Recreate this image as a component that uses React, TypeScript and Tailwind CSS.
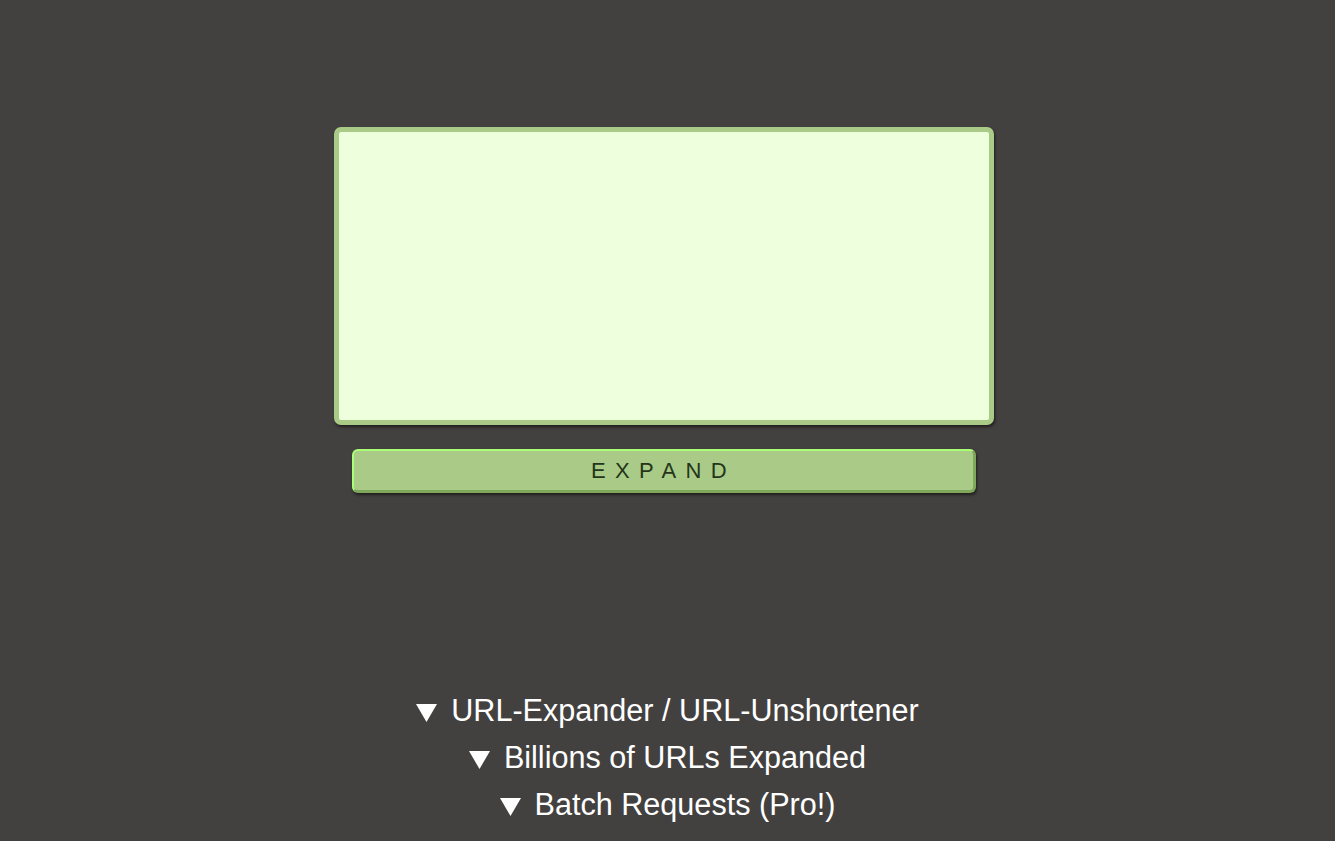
import React from "react";

function Tri() {
  return (
    <svg width="21" height="18" viewBox="0 0 21 18" className="inline-block mr-[14px] align-baseline" style={{ transform: "translateY(1px)" }}>
      <polygon points="0,0 21,0 10.5,18" fill="#ffffff" />
    </svg>
  );
}

export default function App() {
  const lines = [
    "URL-Expander / URL-Unshortener",
    "Billions of URLs Expanded",
    "Batch Requests (Pro!)",
  ];
  return (
    <div
      className="min-h-screen w-full bg-[#43413f] flex flex-col items-center"
      style={{ fontFamily: '"Liberation Sans", Arial, sans-serif' }}
    >
      <div className="flex flex-col items-center pt-[127px] pr-[7px]">
        <textarea
          className="block w-[660px] h-[298px] border-[5px] border-[#aacb88] rounded-[7px] bg-[#eeffdd] resize-none outline-none shadow-[1px_2px_3px_rgba(0,0,0,0.55)] p-2 text-[#223311]"
          spellCheck={false}
        />
        <button
          className="mt-[24px] w-[624px] h-[44px] rounded-[6px] bg-[#aacb88] border-t-2 border-l-2 border-b-[3px] border-r-[3px] border-t-[#aaff77] border-l-[#aaff77] border-b-[#80a85a] border-r-[#80a85a] shadow-[1px_2px_3px_rgba(0,0,0,0.55)] text-[22px] tracking-[9.4px] text-[#24361a] flex items-center justify-center pl-0"
        >
          EXPAND
        </button>
      </div>
      <div className="mt-[194px] flex flex-col items-center text-white text-[30.6px]">
        {lines.map((l) => (
          <div key={l} className="h-[47px] leading-[47px] whitespace-nowrap">
            <Tri />
            {l}
          </div>
        ))}
      </div>
    </div>
  );
}
